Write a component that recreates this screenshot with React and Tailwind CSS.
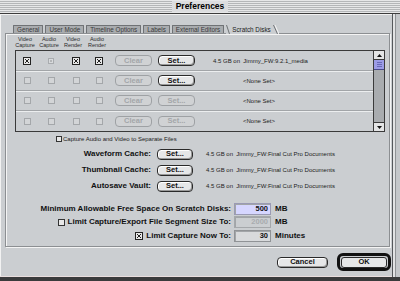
import React from "react";

const rows = [
  { boxes: ["on", "small", "on", "on"], setOn: true, text: "4.5 GB on  Jimmy_FW:9.2.1_media", indent: false },
  { boxes: ["off", "off", "off", "off"], setOn: true, text: "<None Set>", indent: true },
  { boxes: ["off", "off", "off", "off"], setOn: false, text: "<None Set>", indent: true },
  { boxes: ["off", "off", "off", "off"], setOn: false, text: "<None Set>", indent: true },
];

const caches = ["Waveform Cache:", "Thumbnail Cache:", "Autosave Vault:"];

function Box({ state }) {
  if (state === "small") {
    return (
      <div className="w-[6px] h-[6px] border border-[#a9acaf] bg-[#d8dadc] flex items-center justify-center">
        <div className="w-[2px] h-[2px] bg-[#b4b6b8]" />
      </div>
    );
  }
  if (state === "on") {
    return (
      <svg width="8" height="8" viewBox="0 0 8 8" className="block">
        <rect x="0.5" y="0.5" width="7" height="7" fill="#e8e8e8" stroke="#222" />
        <path d="M2 2 L6 6 M6 2 L2 6" stroke="#222" strokeWidth="1" />
      </svg>
    );
  }
  return <div className="w-[7px] h-[7px] border border-[#a4a7aa] bg-[#d3d5d7]" />;
}

function Btn({ label, on, w = "w-[37px]" }) {
  return (
    <div
      className={`${w} h-[11px] rounded-[4px] border flex items-center justify-center text-[7.5px] font-bold leading-none ${
        on
          ? "border-[#2a2a2a] bg-[#e6e7e8] text-[#111] shadow-[inset_1px_1px_0_#fff,inset_-1px_-1px_0_#9a9a9a]"
          : "border-[#9ea1a4] bg-[#d0d2d4] text-[#a3a6a9]"
      }`}
    >
      {label}
    </div>
  );
}

function Tab({ label }) {
  return (
    <div className="h-[8px] px-[3px] mr-[2px] bg-[#a9acaf] border border-b-0 border-[#6f7275] rounded-t-[1px] text-[6.3px] leading-[7px] text-[#3a3a3a] whitespace-nowrap">
      {label}
    </div>
  );
}

function Field({ value, kind }) {
  const cls =
    kind === "sel"
      ? "bg-[#d6d6ff] border-[#9a9ab4] text-[#111]"
      : kind === "off"
      ? "bg-[#cbced1] border-[#a5a8ab] text-[#a9acaf]"
      : "bg-[#d8dadc] border-[#909396] text-[#111]";
  return (
    <div className={`w-[37px] h-[12px] border ${cls} flex items-center justify-end pr-[2px] text-[7.5px] font-bold leading-none shadow-[inset_1px_1px_0_#a2a5a8]`}>
      {value}
    </div>
  );
}

export default function App() {
  return (
    <div className="w-[400px] h-[281px] overflow-hidden bg-[#cbced1] flex flex-col font-['Liberation_Sans',Arial,sans-serif]">
      {/* Title bar */}
      <div className="h-[13px] flex items-center justify-center bg-[repeating-linear-gradient(to_bottom,#e6e7e8_0px,#e6e7e8_1px,#b4b6b8_1px,#b4b6b8_2px)]">
        <span className="px-[4px] bg-[#dcdddf] text-[8.5px] font-bold leading-[11px] text-black">Preferences</span>
      </div>
      <div className="h-[1px] bg-[#3c3c3c]" />

      <div className="flex-1 flex">
        <div className="w-[392px] flex flex-col shadow-[inset_1px_1px_0_#f2f2f2]">
          {/* Tabs */}
          <div className="pt-[11px] pl-[13px] flex items-end relative z-10">
            <Tab label="General" />
            <Tab label="User Mode" />
            <Tab label="Timeline Options" />
            <Tab label="Labels" />
            <Tab label="External Editors" />
            <div className="h-[9px] -mb-px flex items-end bg-[#cbced1]">
              <svg width="4" height="9" className="block">
                <path d="M0.5 0 L3.5 9" stroke="#6f7275" />
              </svg>
              <span className="px-[2px] text-[6.3px] leading-[8px] text-[#222] whitespace-nowrap">Scratch Disks</span>
              <svg width="6" height="9" className="block">
                <path d="M0.5 0 L4.5 9" stroke="#6f7275" />
                <path d="M2 0 L6 9" stroke="#f4f4f4" />
              </svg>
            </div>
          </div>

          {/* Panel */}
          <div className="ml-[5px] w-[385px] h-[214px] border border-[#8c8f92] shadow-[inset_1px_1px_0_#f4f4f4,1px_1px_0_#f4f4f4] flex flex-col">
            {/* Column headers */}
            <div className="flex pl-[7px] pt-[2px] text-[5.5px] leading-[6px] text-[#2c2c2c]">
              {[["Video", "Capture"], ["Audio", "Capture"], ["Video", "Render"], ["Audio", "Render"]].map((h, i) => (
                <div key={i} className="w-[24px] text-center">
                  <div>{h[0]}</div>
                  <div>{h[1]}</div>
                </div>
              ))}
            </div>

            {/* Disk list */}
            <div className="ml-[9px] mt-[2px] w-[370px] h-[82px] border border-[#3a3a3a] flex">
              <div className="flex-1 flex flex-col">
                {rows.map((r, i) => (
                  <div
                    key={i}
                    className={`h-[20px] flex items-center ${i < 3 ? "border-b border-[#a2a5a8] shadow-[0_1px_0_#eceeef]" : ""}`}
                  >
                    <div className="ml-[7px] w-[8px] flex justify-center"><Box state={r.boxes[0]} /></div>
                    <div className="ml-[16px] w-[8px] flex justify-center"><Box state={r.boxes[1]} /></div>
                    <div className="ml-[17px] w-[8px] flex justify-center"><Box state={r.boxes[2]} /></div>
                    <div className="ml-[15px] w-[8px] flex justify-center"><Box state={r.boxes[3]} /></div>
                    <div className="ml-[12px]"><Btn label="Clear" on={false} /></div>
                    <div className="ml-[6px]"><Btn label="Set..." on={r.setOn} /></div>
                    <div className={`${r.indent ? "ml-[48px]" : "ml-[18px]"} text-[6px] leading-none text-[#222] whitespace-pre`}>
                      {r.text}
                    </div>
                  </div>
                ))}
              </div>
              {/* Scrollbar */}
              <div className="w-[11px] border-l border-[#3a3a3a] bg-[#a9acaf] flex flex-col">
                <div className="h-[9px] bg-[#e4e5e6] border-b border-[#3a3a3a] flex items-center justify-center">
                  <svg width="5" height="3"><path d="M2.5 0 L5 3 L0 3 Z" fill="#111" /></svg>
                </div>
                <div className="h-[10px] bg-[#9c9ce6] border-b border-[#4a4a8a] flex flex-col items-center justify-center gap-[1px]">
                  <div className="w-[5px] h-[1px] bg-[#6a6ab8]" />
                  <div className="w-[5px] h-[1px] bg-[#6a6ab8]" />
                  <div className="w-[5px] h-[1px] bg-[#6a6ab8]" />
                </div>
                <div className="flex-1" />
                <div className="h-[9px] bg-[#e4e5e6] border-t border-[#3a3a3a] flex items-center justify-center">
                  <svg width="5" height="3"><path d="M0 0 L5 0 L2.5 3 Z" fill="#111" /></svg>
                </div>
              </div>
            </div>

            {/* Separate files */}
            <div className="mt-[4px] pl-[50px] flex items-center gap-[1px]">
              <div className="w-[6px] h-[6px] border border-[#333] bg-[#e8e8e8]" />
              <span className="text-[6px] leading-none text-[#222]">Capture Audio and Video to Separate Files</span>
            </div>

            {/* Caches */}
            <div className="mt-[4px] flex flex-col">
              {caches.map((c) => (
                <div key={c} className="h-[16px] flex items-center">
                  <div className="w-[145px] text-right text-[8px] font-bold leading-none text-[#111]">{c}</div>
                  <div className="ml-[6px]"><Btn label="Set..." on w="w-[36px]" /></div>
                  <div className="ml-[13px] text-[6px] leading-none text-[#222] whitespace-pre">
                    4.5 GB on  Jimmy_FW:Final Cut Pro Documents
                  </div>
                </div>
              ))}
            </div>

            {/* Limits */}
            <div className="mt-[8px] flex flex-col">
              <div className="h-[13px] flex items-center">
                <div className="w-[225px] text-right text-[8px] font-bold leading-none text-[#111]">
                  Minimum Allowable Free Space On Scratch Disks:
                </div>
                <div className="ml-[3px]"><Field value="500" kind="sel" /></div>
                <span className="ml-[4px] text-[8px] font-bold leading-none text-[#111]">MB</span>
              </div>
              <div className="h-[14px] flex items-center">
                <div className="w-[225px] flex items-center justify-end gap-[3px] text-[8px] font-bold leading-none text-[#111]">
                  <div className="w-[7px] h-[7px] border border-[#333] bg-[#e8e8e8]" />
                  <span>Limit Capture/Export File Segment Size To:</span>
                </div>
                <div className="ml-[3px]"><Field value="2000" kind="off" /></div>
                <span className="ml-[4px] text-[8px] font-bold leading-none text-[#111]">MB</span>
              </div>
              <div className="h-[13px] flex items-center">
                <div className="w-[225px] flex items-center justify-end gap-[3px] text-[8px] font-bold leading-none text-[#111]">
                  <Box state="on" />
                  <span>Limit Capture Now To:</span>
                </div>
                <div className="ml-[3px]"><Field value="30" kind="on" /></div>
                <span className="ml-[4px] text-[8px] font-bold leading-none text-[#111]">Minutes</span>
              </div>
            </div>
          </div>

          {/* Dialog buttons */}
          <div className="mt-[6px] pr-[1px] flex justify-end items-center gap-[9px]">
            <Btn label="Cancel" on w="w-[51px]" />
            <div className="w-[54px] h-[18px] rounded-[6px] border-[3px] border-[#111] flex items-center justify-center bg-[#cbced1]">
              <div className="w-[46px] h-[11px] rounded-[3px] border border-[#2a2a2a] bg-[#e6e7e8] flex items-center justify-center text-[7.5px] font-bold leading-none text-[#111]">
                OK
              </div>
            </div>
          </div>
          <div className="flex-1" />
          <div className="h-[1px] bg-[#e9dede]" />
        </div>
        {/* Right frame */}
        <div className="w-[1px] bg-[#55585b]" />
        <div className="w-[2px] bg-[#e2e3e4]" />
        <div className="w-[1px] bg-[#8f9295]" />
        <div className="flex-1 bg-[#c4c7ca]" />
      </div>
      <div className="h-[4px] bg-[#3a3b3c]" />
    </div>
  );
}
